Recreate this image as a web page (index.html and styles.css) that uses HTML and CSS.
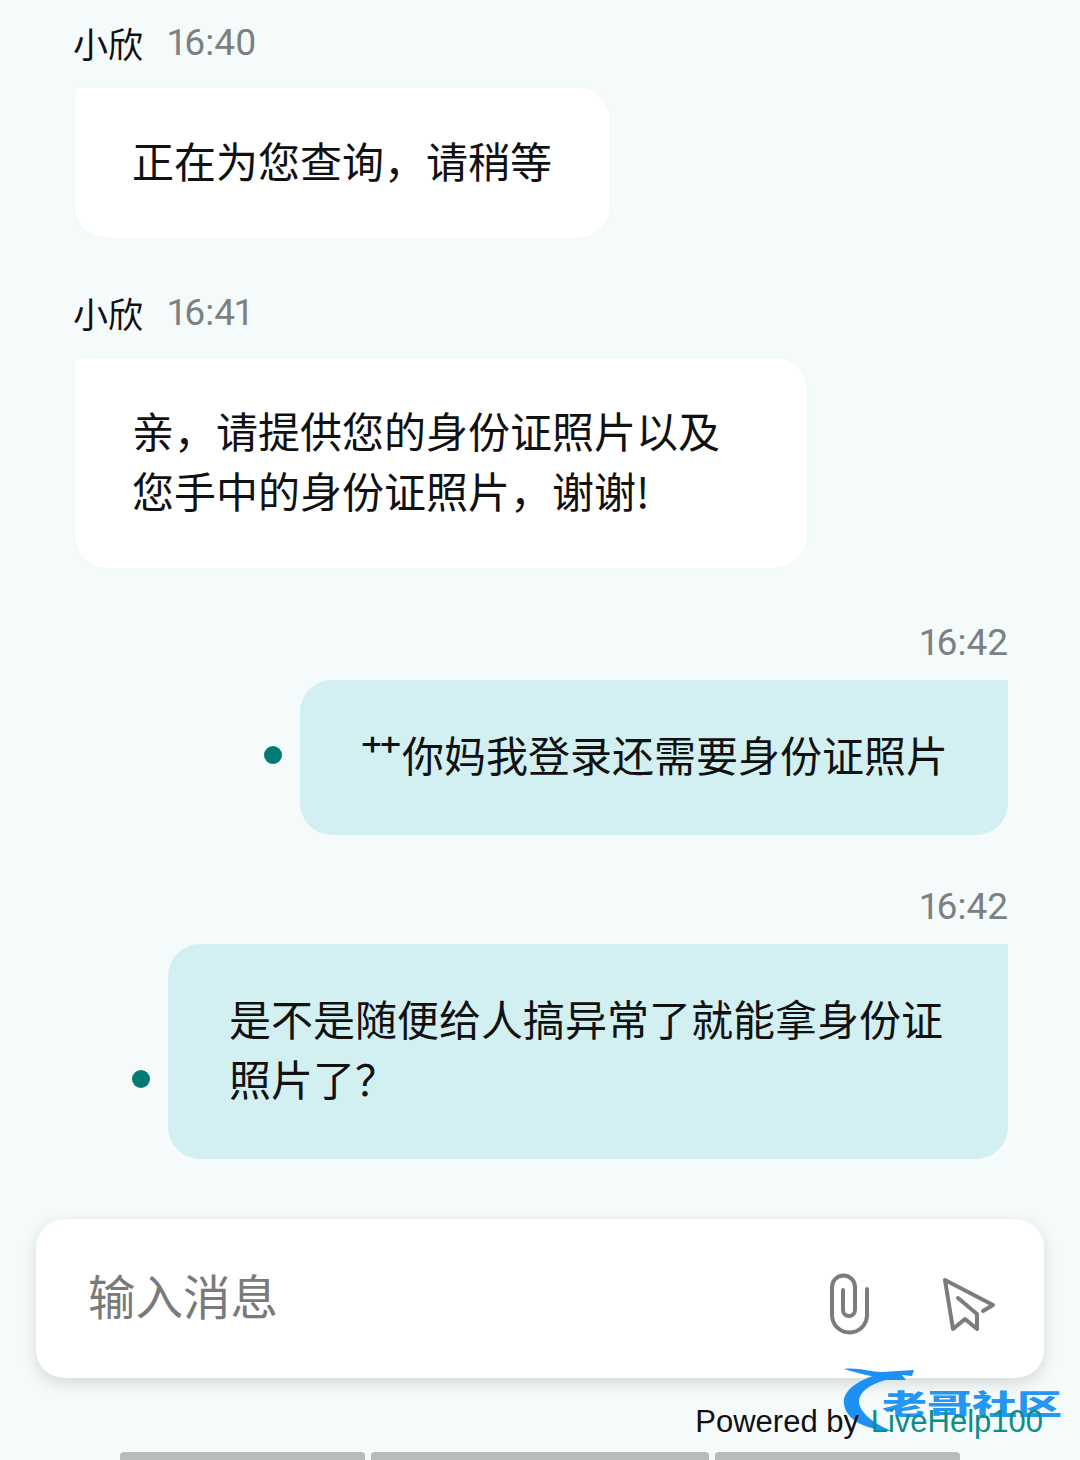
FILE: index.html
```html
<!DOCTYPE html>
<html lang="zh">
<head>
    <meta charset="UTF-8">
    <title>LiveHelp100</title>
    <link rel="stylesheet" href="styles.css">
</head>
<body>

<div class="page">
    <div class="chat">
        <div class="msg agent">
            <div class="meta"><span class="name">小欣</span><span class="time">16:40</span></div>
            <div class="bubble">正在为您查询，请稍等</div>
        </div>

        <div class="msg agent">
            <div class="meta"><span class="name">小欣</span><span class="time">16:41</span></div>
            <div class="bubble wide">亲，请提供您的身份证照片以及<br>您手中的身份证照片，谢谢!</div>
        </div>

        <div class="msg user">
            <div class="meta"><span class="time">16:42</span></div>
            <div class="row">
                <span class="dot"></span>
                <div class="bubble">⺿你妈我登录还需要身份证照片</div>
            </div>
        </div>

        <div class="msg user">
            <div class="meta"><span class="time">16:42</span></div>
            <div class="row">
                <span class="dot"></span>
                <div class="bubble wide">是不是随便给人搞异常了就能拿身份证<br>照片了？</div>
            </div>
        </div>
    </div>

    <div class="composer">
        <div class="placeholder">输入消息</div>
        <div class="tools">
            <svg class="clip" viewBox="0 0 40 62" width="40" height="62">
                <path d="M14 17V37a6 6 0 0 0 12 0V14a11.5 11.5 0 0 0-23 0V42a17.5 17.5 0 0 0 35 0V16"/>
            </svg>
            <svg class="send" viewBox="0 0 60 60" width="60" height="60">
                <path d="M43 37L53 31L5 6L13 55L25 45L37 55V40L18 24"/>
            </svg>
        </div>
    </div>

    <div class="footer">Powered by <span class="brand">LiveHelp100</span></div>

    <div class="bars">
        <span class="bar side"></span>
        <span class="bar mid"></span>
        <span class="bar side"></span>
    </div>

    <div class="watermark">
        <svg viewBox="0 0 80 75" width="80" height="75">
            <path class="swoosh" d="M45 8C18 14 0 26 2 40C4 56 24 66 50 67C36 62 18 50 17 38C17 26 32 18 52 14Z"/>
            <path class="swoosh" d="M2 5C15 3 28 8 40 8L72 6L70 12L60 11L64 16L44 16C30 12 14 9 2 5Z"/>
        </svg>
        <span class="wm-text">老哥社区</span>
    </div>
</div>

</body>
</html>
```

FILE: styles.css
```css
* {
    box-sizing: border-box;
    margin: 0;
    padding: 0;
}

body {
    background-color: #f5fafb;
    font-family: "Noto Sans CJK SC", Roboto, sans-serif;
    color: #111;
}

.page {
    position: relative;
    height: 1460px;
    overflow: hidden;
    display: flex;
    flex-direction: column;
}

.chat {
    padding: 16px 72px 0 75px;
    height: 1219px;
}

.msg {
    display: flex;
    flex-direction: column;
}

.meta {
    height: 54px;
    line-height: 54px;
    font-size: 36px;
    display: flex;
    gap: 25px;
}

.name {
    margin-left: -2px;
    font-size: 35px;
}

.time {
    font-family: Roboto, sans-serif;
    font-size: 37px;
    font-variant-numeric: proportional-nums;
    color: #7b8081;
}

.bubble {
    font-size: 42px;
    line-height: 60px;
    white-space: nowrap;
}

.agent {
    align-items: flex-start;
    margin-bottom: 48px;
}

.agent .meta {
    margin-bottom: 18px;
}

.agent .bubble {
    background-color: #fff;
    padding: 42px 57px 48px;
    width: 535px;
    border-radius: 4px 32px 32px 32px;
    box-shadow: 0 0 3px rgba(0, 0, 0, 0.04);
}

.agent .bubble.wide {
    width: 732px;
}

.user {
    align-items: flex-end;
    margin-bottom: 45px;
}

.user .meta {
    margin-bottom: 10px;
}

.row {
    display: flex;
    align-items: flex-end;
    gap: 18px;
}

.dot {
    width: 18px;
    height: 18px;
    margin-bottom: 71px;
    border-radius: 50%;
    background-color: #047a75;
}

.user .bubble {
    background-color: #d2f0f1;
    padding: 44px 60px 51px;
    border-radius: 32px 0 32px 32px;
}

.user .bubble.wide {
    width: 840px;
    padding-left: 61px;
    padding-right: 0;
}

.composer {
    margin: 0 36px;
    height: 159px;
    background-color: #fff;
    border-radius: 28px;
    box-shadow: 0 5px 16px rgba(0, 0, 0, 0.14);
    padding: 0 44px 0 52px;
    display: flex;
    align-items: center;
    justify-content: space-between;
}

.placeholder {
    font-size: 47.5px;
    color: #7a7a7a;
    margin-bottom: 8px;
}

.tools {
    display: flex;
    align-items: center;
    gap: 71px;
    margin-top: 10px;
}

.tools svg {
    fill: none;
    stroke: #7c7c7c;
    stroke-width: 4;
    stroke-linecap: round;
    stroke-linejoin: round;
}

.footer {
    margin-top: 28px;
    padding-right: 37px;
    text-align: right;
    font-family: "Liberation Sans", Arial, sans-serif;
    font-size: 31px;
    line-height: 32px;
    color: #111;
    position: relative;
    z-index: 2;
}

.brand {
    margin-left: 3px;
    color: #0a8f86;
}

.bars {
    margin-top: auto;
    margin-left: 120px;
    display: flex;
    gap: 6px;
}

.bar {
    height: 8px;
    background-color: #b9bcbd;
    border-radius: 4px 4px 0 0;
}

.bar.side {
    width: 245px;
}

.bar.mid {
    width: 338px;
}

/* site watermark stamped over the corner */
.watermark {
    position: absolute;
    left: 842px;
    top: 1364px;
    width: 225px;
    height: 78px;
    z-index: 1;
}

.swoosh {
    fill: #1e90f4;
}

.wm-text {
    position: absolute;
    left: 40px;
    top: 24px;
    font-size: 45px;
    line-height: 50px;
    font-weight: 900;
    white-space: nowrap;
    color: #2496f5;
    text-shadow: 0 0 3px rgba(255, 255, 255, 0.8);
    transform: scaleY(0.62);
    transform-origin: top left;
}
```
